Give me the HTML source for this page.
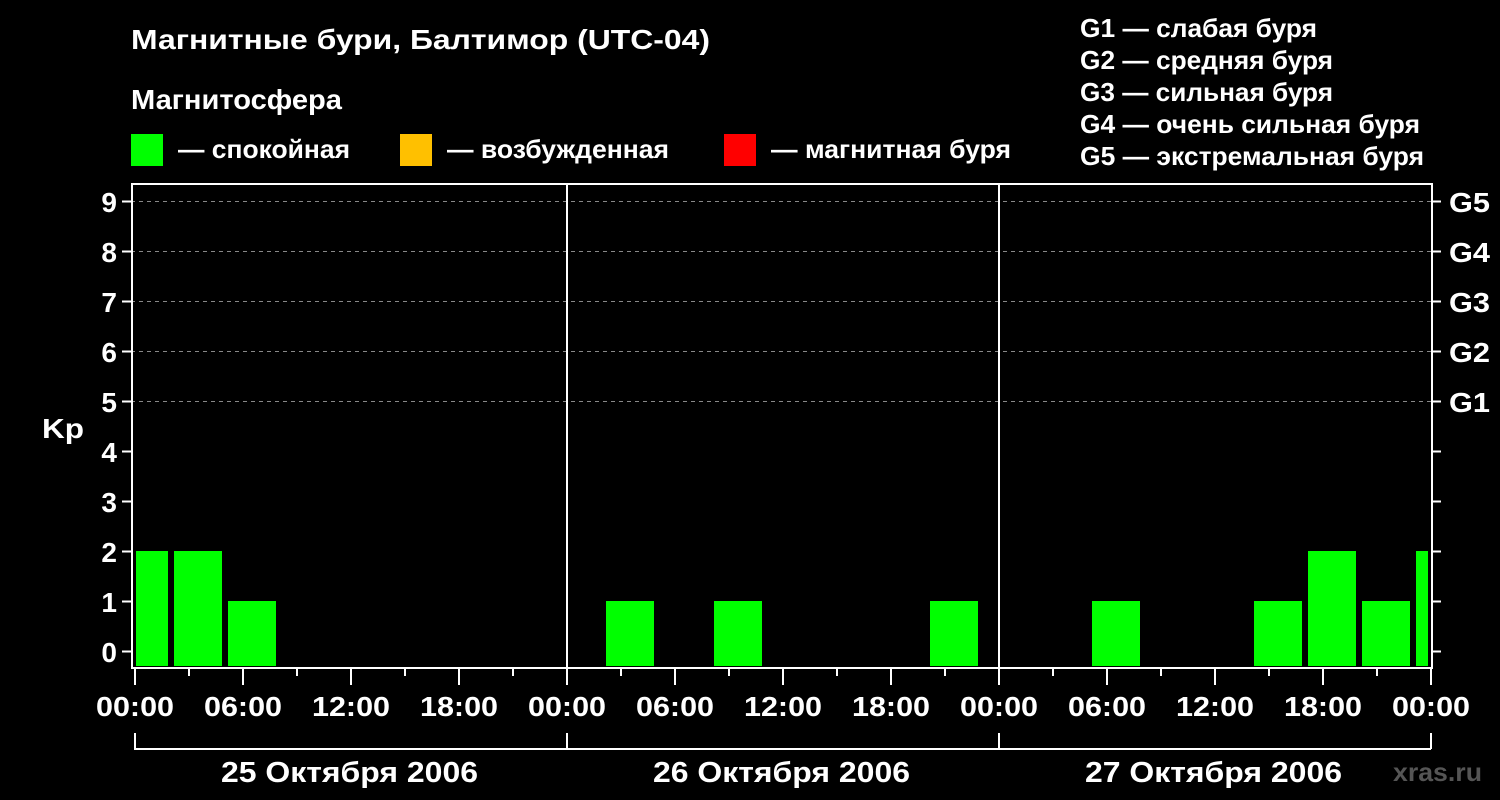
<!DOCTYPE html>
<html><head><meta charset="utf-8"><style>
html,body{margin:0;padding:0;background:#000;width:1500px;height:800px;overflow:hidden}
svg text{font-family:"Liberation Sans",Arial,sans-serif;font-weight:bold;fill:#fff}
</style></head><body>
<svg width="1500" height="800" xmlns="http://www.w3.org/2000/svg">
<rect width="1500" height="800" fill="#000"/>
<text x="131" y="49" font-size="28" textLength="579" lengthAdjust="spacingAndGlyphs">Магнитные бури, Балтимор (UTC-04)</text>
<text x="131" y="109" font-size="28" textLength="211" lengthAdjust="spacingAndGlyphs">Магнитосфера</text>
<rect x="131" y="134" width="32" height="32" fill="#00ff00"/>
<text x="178" y="158" font-size="26" textLength="172" lengthAdjust="spacingAndGlyphs">— спокойная</text>
<rect x="400" y="134" width="32" height="32" fill="#ffc000"/>
<text x="447" y="158" font-size="26" textLength="222" lengthAdjust="spacingAndGlyphs">— возбужденная</text>
<rect x="724" y="134" width="32" height="32" fill="#ff0000"/>
<text x="771" y="158" font-size="26" textLength="240" lengthAdjust="spacingAndGlyphs">— магнитная буря</text>
<g font-size="26">
<text x="1080" y="37" textLength="237" lengthAdjust="spacingAndGlyphs">G1 — слабая буря</text>
<text x="1080" y="69" textLength="253" lengthAdjust="spacingAndGlyphs">G2 — средняя буря</text>
<text x="1080" y="101" textLength="253" lengthAdjust="spacingAndGlyphs">G3 — сильная буря</text>
<text x="1080" y="133" textLength="340" lengthAdjust="spacingAndGlyphs">G4 — очень сильная буря</text>
<text x="1080" y="165" textLength="344" lengthAdjust="spacingAndGlyphs">G5 — экстремальная буря</text>
</g>
<g stroke="#888" stroke-dasharray="4,4" stroke-width="1">
<line x1="131" y1="201.5" x2="1432" y2="201.5"/>
<line x1="131" y1="251.5" x2="1432" y2="251.5"/>
<line x1="131" y1="301.5" x2="1432" y2="301.5"/>
<line x1="131" y1="351.5" x2="1432" y2="351.5"/>
<line x1="131" y1="401.5" x2="1432" y2="401.5"/>
</g>
<g fill="#00ff00">
<rect x="136" y="551" width="32" height="115"/>
<rect x="174" y="551" width="48" height="115"/>
<rect x="228" y="601" width="48" height="65"/>
<rect x="606" y="601" width="48" height="65"/>
<rect x="714" y="601" width="48" height="65"/>
<rect x="930" y="601" width="48" height="65"/>
<rect x="1092" y="601" width="48" height="65"/>
<rect x="1254" y="601" width="48" height="65"/>
<rect x="1308" y="551" width="48" height="115"/>
<rect x="1362" y="601" width="48" height="65"/>
<rect x="1416" y="551" width="12" height="115"/>
</g>
<g stroke="#fff" stroke-width="2" fill="none">
<rect x="132" y="184" width="1300" height="484"/>
<line x1="567" y1="184" x2="567" y2="668"/>
<line x1="999" y1="184" x2="999" y2="668"/>
<path d="M122 201.5h10M122 251.5h10M122 301.5h10M122 351.5h10M122 401.5h10M122 451.5h10M122 501.5h10M122 551.5h10M122 601.5h10M122 651.5h10"/>
<path d="M1432 201.5h9M1432 251.5h9M1432 301.5h9M1432 351.5h9M1432 401.5h9M1432 451.5h9M1432 501.5h9M1432 551.5h9M1432 601.5h9M1432 651.5h9"/>
<path d="M135 668v17M189 668v8M243 668v17M297 668v8M351 668v17M405 668v8M459 668v17M513 668v8M567 668v17M621 668v8M675 668v17M729 668v8M783 668v17M837 668v8M891 668v17M945 668v8M999 668v17M1053 668v8M1107 668v17M1161 668v8M1215 668v17M1269 668v8M1323 668v17M1377 668v8M1431 668v17"/>
<path d="M135 733v16H1431M567 733v16M999 733v16M1431 733v16"/>
</g>
<g font-size="28" text-anchor="end">
<text x="117" y="212">9</text><text x="117" y="262">8</text><text x="117" y="312">7</text>
<text x="117" y="362">6</text><text x="117" y="412">5</text><text x="117" y="462">4</text>
<text x="117" y="512">3</text><text x="117" y="562">2</text><text x="117" y="612">1</text><text x="117" y="662">0</text>
</g>
<text x="42" y="438" font-size="28" textLength="42" lengthAdjust="spacingAndGlyphs">Kp</text>
<g font-size="28">
<text x="1449" y="212" textLength="41" lengthAdjust="spacingAndGlyphs">G5</text><text x="1449" y="262" textLength="41" lengthAdjust="spacingAndGlyphs">G4</text><text x="1449" y="312" textLength="41" lengthAdjust="spacingAndGlyphs">G3</text>
<text x="1449" y="362" textLength="41" lengthAdjust="spacingAndGlyphs">G2</text><text x="1449" y="412" textLength="41" lengthAdjust="spacingAndGlyphs">G1</text>
</g>
<g font-size="28">
<text x="96" y="716" textLength="78" lengthAdjust="spacingAndGlyphs">00:00</text><text x="204" y="716" textLength="78" lengthAdjust="spacingAndGlyphs">06:00</text><text x="312" y="716" textLength="78" lengthAdjust="spacingAndGlyphs">12:00</text><text x="420" y="716" textLength="78" lengthAdjust="spacingAndGlyphs">18:00</text>
<text x="528" y="716" textLength="78" lengthAdjust="spacingAndGlyphs">00:00</text><text x="636" y="716" textLength="78" lengthAdjust="spacingAndGlyphs">06:00</text><text x="744" y="716" textLength="78" lengthAdjust="spacingAndGlyphs">12:00</text><text x="852" y="716" textLength="78" lengthAdjust="spacingAndGlyphs">18:00</text>
<text x="960" y="716" textLength="78" lengthAdjust="spacingAndGlyphs">00:00</text><text x="1068" y="716" textLength="78" lengthAdjust="spacingAndGlyphs">06:00</text><text x="1176" y="716" textLength="78" lengthAdjust="spacingAndGlyphs">12:00</text><text x="1284" y="716" textLength="78" lengthAdjust="spacingAndGlyphs">18:00</text>
<text x="1392" y="716" textLength="78" lengthAdjust="spacingAndGlyphs">00:00</text>
<text x="221" y="782" font-size="29" textLength="257" lengthAdjust="spacingAndGlyphs">25 Октября 2006</text>
<text x="653" y="782" font-size="29" textLength="257" lengthAdjust="spacingAndGlyphs">26 Октября 2006</text>
<text x="1085" y="782" font-size="29" textLength="257" lengthAdjust="spacingAndGlyphs">27 Октября 2006</text>
</g>
<text x="1393" y="781" font-size="26" textLength="89" lengthAdjust="spacingAndGlyphs" style="fill:#555">xras.ru</text>
</svg>
</body></html>
